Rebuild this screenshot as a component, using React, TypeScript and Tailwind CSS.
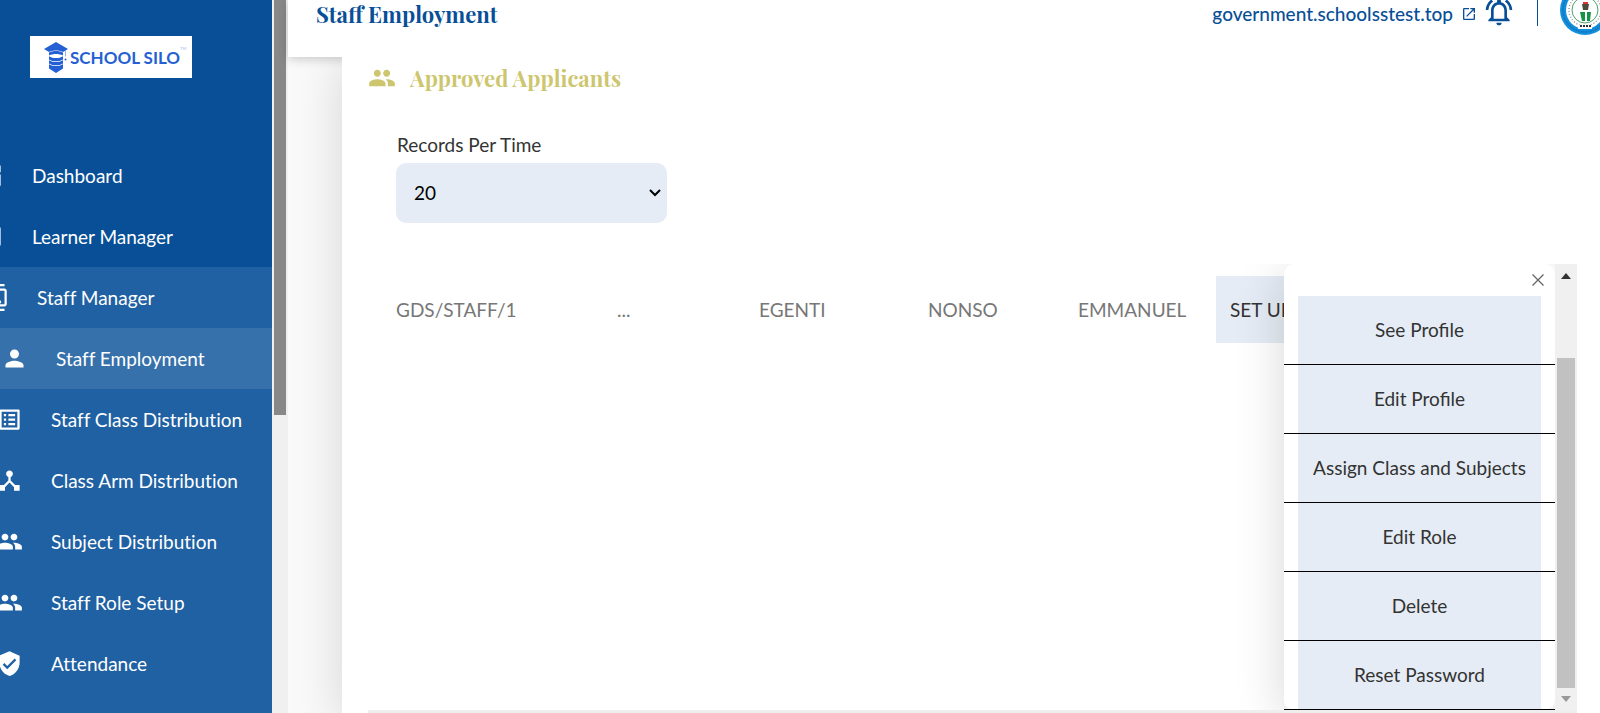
import React from 'react';
import {
  MdDashboard,
  MdPortrait,
  MdOutlineContacts,
  MdPerson,
  MdOutlineListAlt,
  MdDeviceHub,
  MdPeople,
  MdVerifiedUser,
  MdOpenInNew,
  MdOutlineNotificationsActive,
} from 'react-icons/md';
import type { IconType } from 'react-icons';

interface NavItem {
  label: string;
  icon: IconType;
  className: string;
}

const navItems: NavItem[] = [
  { label: 'Dashboard', icon: MdDashboard, className: '' },
  { label: 'Learner Manager', icon: MdPortrait, className: '' },
  { label: 'Staff Manager', icon: MdOutlineContacts, className: 'bg-[#2061a3] pl-[5px]' },
  { label: 'Staff Employment', icon: MdPerson, className: 'bg-[#3671ab] pl-6' },
  { label: 'Staff Class Distribution', icon: MdOutlineListAlt, className: 'bg-[#2061a3] pl-[19px]' },
  { label: 'Class Arm Distribution', icon: MdDeviceHub, className: 'bg-[#2061a3] pl-[19px]' },
  { label: 'Subject Distribution', icon: MdPeople, className: 'bg-[#2061a3] pl-[19px]' },
  { label: 'Staff Role Setup', icon: MdPeople, className: 'bg-[#2061a3] pl-[19px]' },
  { label: 'Attendance', icon: MdVerifiedUser, className: 'bg-[#2061a3] pl-[19px]' },
];

const menuActions = [
  'See Profile',
  'Edit Profile',
  'Assign Class and Subjects',
  'Edit Role',
  'Delete',
  'Reset Password',
];

const Logo: React.FC = () => (
  <div className="flex h-[42px] w-[162px] items-center bg-white pl-3.5">
    <svg className="h-[31px] w-6 shrink-0" viewBox="0 0 24 31" fill="#2460d3">
      <path d="M12 0 0 7l5 3c4-2 10-2 14 0l5-3z" />
      <path d="M5 10.500c4-2 10-2 14 0v3c-4-2-10-2-14 0zM5 14.200c4 2.500 10 2.500 14 0v3.200c-4 2.500-10 2.500-14 0zM5 18.200c4 2.500 10 2.500 14 0v3.200c-4 2.500-10 2.500-14 0zM5 22.200c4 2.500 10 2.500 14 0v4.300l-7 4.500-7-4.500z" />
      <path d="M21.500 8.500v6" stroke="#2460d3" strokeWidth="0.500" />
      <circle cx="21.500" cy="17.500" r="1" />
    </svg>
    <span className="ml-0.5 pt-0.5 font-['Lato',sans-serif] text-[17px] font-bold whitespace-nowrap text-[#2460d3]">
      SCHOOL SILO
    </span>
    <span className="mb-4 text-[4px] text-[#9db8ee]">TM</span>
  </div>
);

const Crest: React.FC = () => (
  <svg className="h-[50px] w-[50px] shrink-0" viewBox="0 0 50 50">
    <circle cx="25" cy="25" r="25" fill="#1590dc" />
    <circle cx="25" cy="25" r="22" fill="none" stroke="#0f74bd" strokeWidth="2" strokeDasharray="1.500 1" />
    <circle cx="25" cy="25" r="19" fill="#fff" />
    <circle cx="25" cy="25" r="16" fill="none" stroke="#999" strokeWidth="1.500" strokeDasharray="1 2" />
    <circle cx="25" cy="25" r="13" fill="none" stroke="#4aa36a" strokeWidth="1" />
    <path d="M20 27h5v9h-3zM27 27h4l-1 9h-3z" fill="#159447" />
    <path d="M22 19h7l-1 6h-5z" fill="#4b4b3b" />
    <path d="M23 17h5v2h-5z" fill="#d33" />
    <path d="M18 40h14v4H18z" fill="#fff" />
    <path d="M20 41h11" stroke="#333" strokeWidth="2" strokeDasharray="2 1" />
  </svg>
);

const Sidebar: React.FC = () => (
  <aside className="flex shrink-0">
    <div className="w-[272px] overflow-hidden bg-[#084f97]">
      <div className="pt-9 pl-[30px]">
        <Logo />
      </div>
      <nav className="mt-[67px] -ml-[23px] text-white [font-variant-ligatures:none]">
        {navItems.map(({ label, icon: Icon, className }) => (
          <a key={label} href="#" className={`flex h-[61px] items-center gap-7 whitespace-nowrap ${className}`}>
            <Icon className="h-[27px] w-[27px] shrink-0" />
            <span className="pt-0.5">{label}</span>
          </a>
        ))}
        <div className="h-[61px] bg-[#2061a3]" />
      </nav>
    </div>
    {/* Scroll track */}
    <div className="w-4 bg-[#f0f0f0] px-0.5">
      <div className="h-[415px] bg-[#888]" />
    </div>
  </aside>
);

const Header: React.FC = () => (
  <header className="h-[57px] shrink-0 bg-white shadow-[0_2px_10px_rgba(0,0,0,0.2)]">
    <div className="-mt-[18px] flex h-[56px] items-center justify-between pl-7 text-[#084f97]">
      <h1 className="pt-2 font-['Playfair_Display','Liberation_Serif',serif] text-[22px] leading-6 font-bold">
        Staff Employment
      </h1>
      <div className="-mr-[10px] flex items-center">
        <a href="#" className="flex items-center gap-2 pt-2 font-medium">
          government.schoolsstest.top
          <MdOpenInNew className="h-4 w-4" />
        </a>
        <MdOutlineNotificationsActive className="mt-1 ml-1.5 h-8 w-8" />
        <div className="mr-[22px] ml-[22px] h-8 w-px bg-[#084f97]" />
        <Crest />
      </div>
    </div>
  </header>
);

const ActionMenu: React.FC = () => (
  <div className="absolute top-0 right-[22px] w-[271px] rounded-[10px] bg-white shadow-[0_8px_50px_rgba(0,0,0,0.16)]">
    <div className="flex h-8 items-center justify-end pr-[11px]">
      <button aria-label="Close">
        <svg className="h-3 w-3" viewBox="0 0 12 12" fill="none" stroke="#666" strokeWidth="1.300">
          <path d="M0.500 0.500l11 11M11.500 0.500l-11 11" />
        </svg>
      </button>
    </div>
    {menuActions.map((action) => (
      <div key={action} className="border-b border-black px-3.5">
        <button className="h-[68px] w-full bg-[#e5ecf5] pt-px text-[#333]">{action}</button>
      </div>
    ))}
  </div>
);

const StaffTable: React.FC = () => (
  <div className="relative flex min-h-[446px] overflow-hidden">
    <div className="flex-1 pt-3 pl-5">
      <table className="w-[977px] table-fixed text-left text-[#777]">
        <tbody>
          <tr className="h-[67px]">
            <td className="w-[221px] pt-0.5 pl-2">GDS/STAFF/1</td>
            <td className="w-[142px] pt-0.5 pl-2">...</td>
            <td className="w-[169px] pt-0.5 pl-2">EGENTI</td>
            <td className="w-[150px] pt-0.5 pl-2">NONSO</td>
            <td className="w-[146px] pt-0.5 pl-2">EMMANUEL</td>
            <td className="w-[149px]">
              <button className="h-[67px] w-full bg-[#e5ecf5] pt-0.5 pl-3.5 text-left text-[#333]">SET UP</button>
            </td>
          </tr>
        </tbody>
      </table>
    </div>
    <ActionMenu />
    <div className="relative flex w-[22px] flex-col items-center bg-[#f0f0f0]">
      <svg className="h-6 w-3" viewBox="0 0 12 24" fill="#333">
        <path d="M1 15h10L6 9z" />
      </svg>
      <div className="mt-[70px] w-[18px] flex-1 bg-[#c1c1c1]" />
      <svg className="h-[22px] w-3" viewBox="0 0 12 22" fill="#999">
        <path d="M1 8h10l-5 6z" />
      </svg>
    </div>
  </div>
);

const App: React.FC = () => (
  <div className="flex h-screen overflow-hidden bg-[#fafafa] font-['Lato',sans-serif] text-[19px]">
    <Sidebar />
    <div className="flex min-w-0 flex-1 flex-col">
      <Header />
      {/* The card's shadow only falls to its left, never up over the header */}
      <main className="relative ml-[54px] flex-1 bg-white pr-[23px] pl-[26px] shadow-[0_0_50px_rgba(0,0,0,0.15)] [clip-path:inset(0_0_0_-54px)]">
        <h2 className="flex items-center gap-3.5 pt-1.5 font-['Playfair_Display','Liberation_Serif',serif] text-[22px] leading-[30px] font-bold text-[#cdc66f]">
          <MdPeople className="h-[28px] w-[28px]" />
          Approved Applicants
        </h2>
        <div className="mt-[37px] mb-[41px] ml-7 w-[271px]">
          <label htmlFor="records" className="block h-[33px] pt-px pl-px text-[#333]">
            Records Per Time
          </label>
          <div className="relative">
            <select id="records" className="h-[60px] w-full appearance-none rounded-[10px] bg-[#e5ecf5] pl-[18px] text-black">
              <option>20</option>
              <option>50</option>
              <option>100</option>
            </select>
            <svg className="pointer-events-none absolute top-6 right-1.5 h-3 w-3" viewBox="0 0 12 12" fill="none" stroke="#000" strokeWidth="2">
              <path d="M1 3l5 5 5-5" />
            </svg>
          </div>
        </div>
        <StaffTable />
        <div className="h-4 bg-[#eee]" />
      </main>
    </div>
  </div>
);

export default App;
